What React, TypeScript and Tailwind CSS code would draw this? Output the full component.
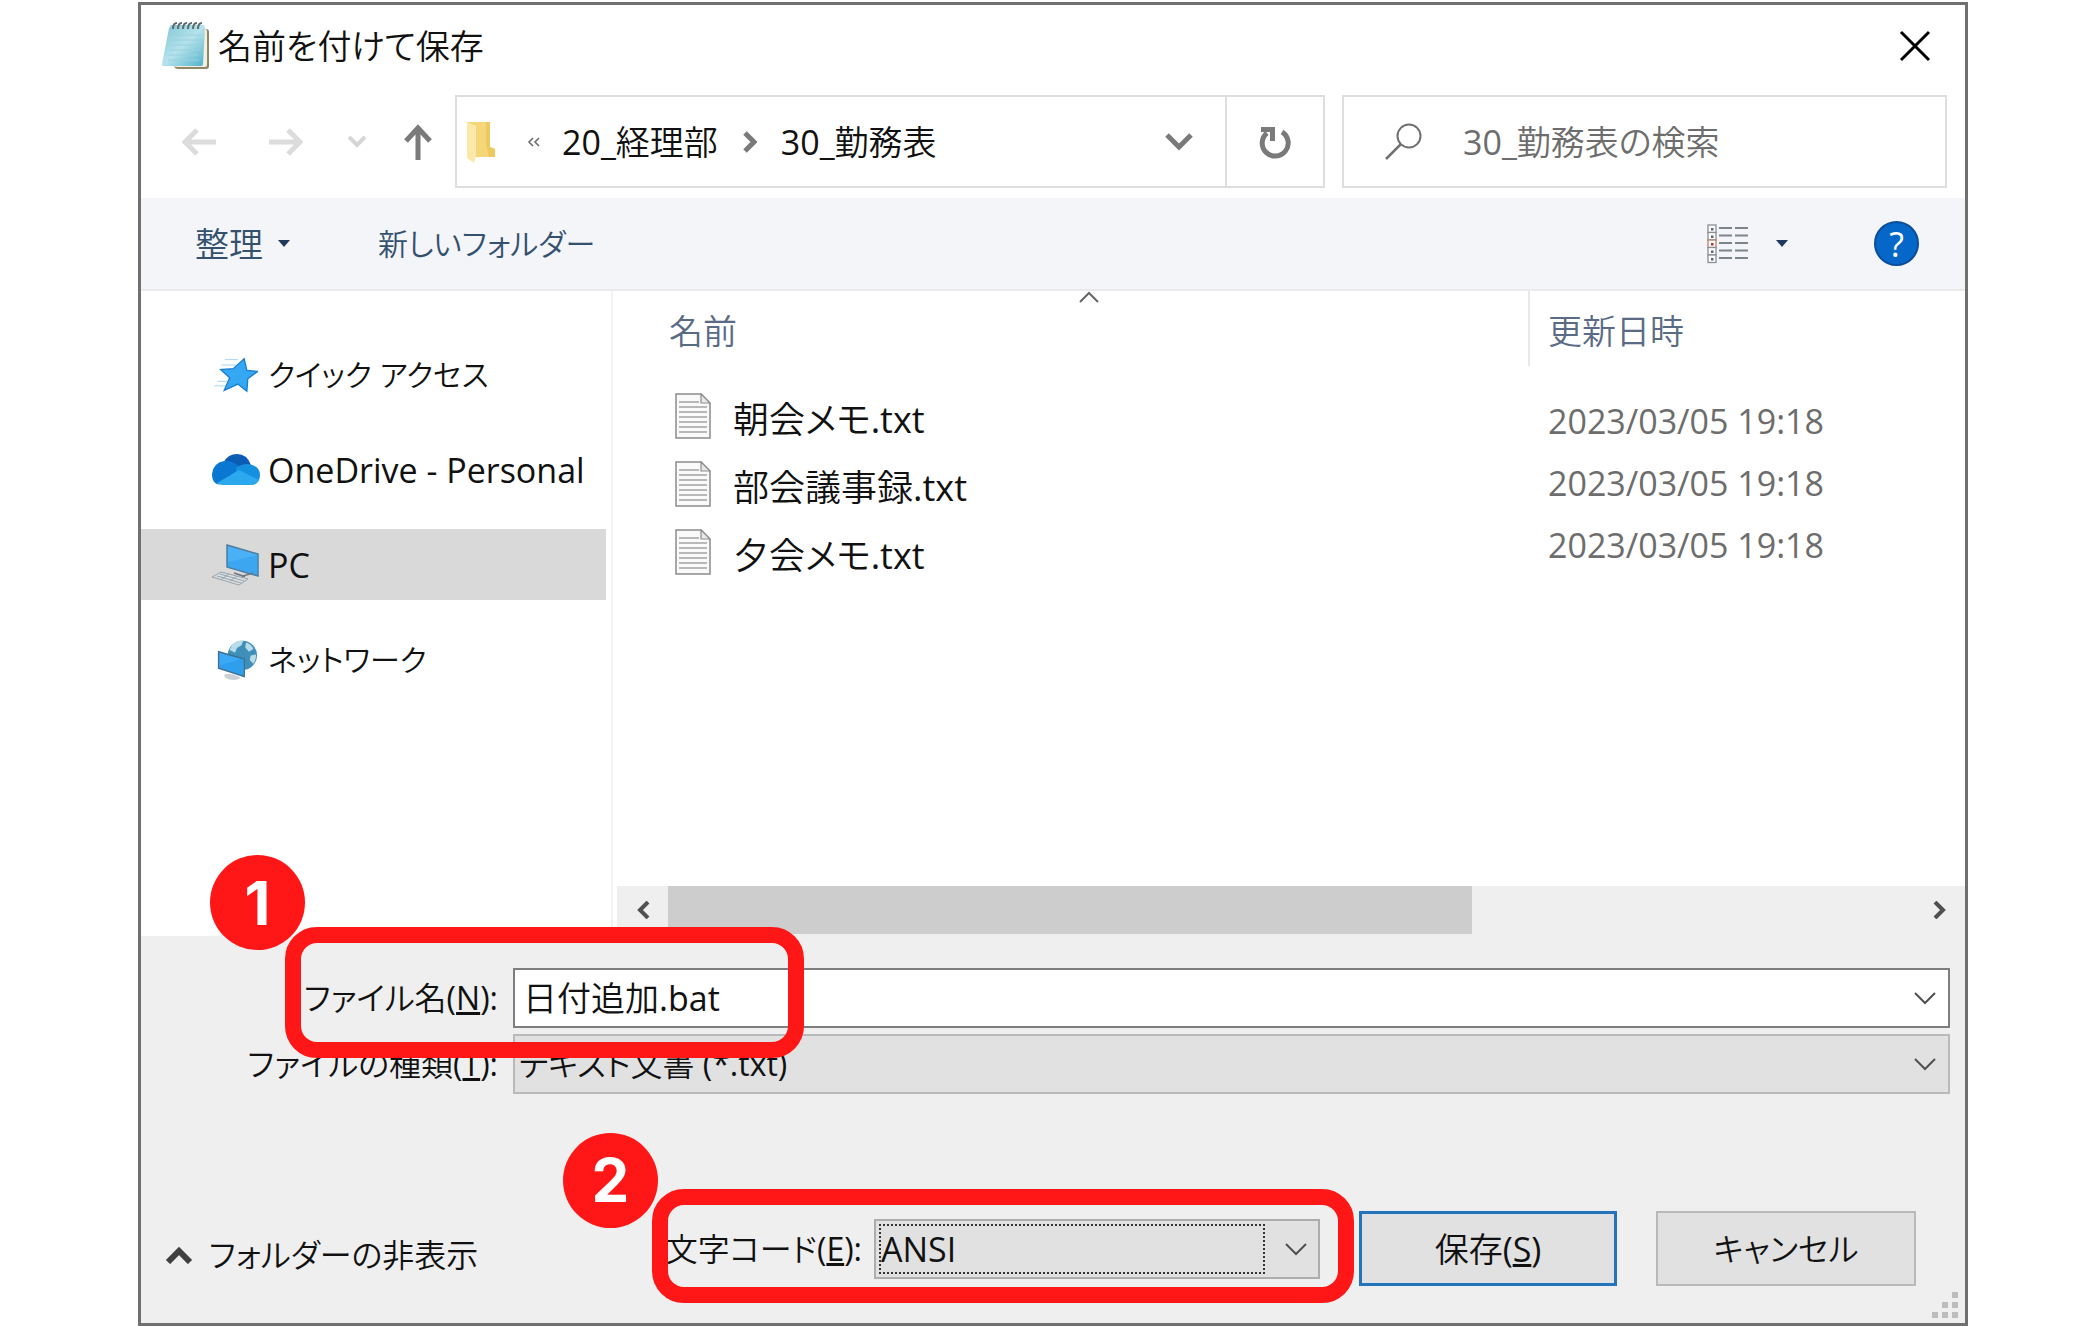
import { useState } from "react";
import type { ReactNode } from "react";

type FileRow = { name: string; date: string; dateCell: string };

const FILES: FileRow[] = [
  { name: "朝会メモ.txt", date: "2023/03/05 19:18", dateCell: "pt-2.5" },
  { name: "部会議事録.txt", date: "2023/03/05 19:18", dateCell: "pb-0.5" },
  { name: "夕会メモ.txt", date: "2023/03/05 19:18", dateCell: "pb-3.5" },
];

function NotepadIcon() {
  return (
    <svg width="48" height="50" viewBox="0 0 48 50" aria-hidden="true">
      <defs>
        <linearGradient id="pad" x1="0" y1="0" x2="1" y2="1">
          <stop offset="0" stopColor="#7fc4d6" />
          <stop offset="0.5" stopColor="#b5e3ec" />
          <stop offset="1" stopColor="#4fb0c9" />
        </linearGradient>
      </defs>
      <path d="M13 8h31q3 0 3 3v34q0 3-3 3H16q-3 0-4-3z" fill="#8f8668" />
      <path d="M12 8h31q2 0 2 3v33q0 2-2 2H15q-3 0-4-2z" fill="#f3efdf" />
      <path d="M9 4h33l1 3-2 36q0 2-3 2H1q-1 0-1-2L7 7z" fill="url(#pad)" />
      <path
        d="M10 14h29M9 19h30M9 24h29M8 29h30M7 34h30M6 39h31"
        stroke="#9ad0de"
        strokeWidth="1"
      />
      <path
        d="M11 8q0-6 4-6M16 8q0-6 4-6M21 8q0-6 4-6M26 8q0-6 4-6M31 8q0-6 4-6M36 8q0-6 4-6"
        stroke="#5d6b70"
        strokeWidth="2"
        fill="none"
      />
    </svg>
  );
}

function FolderIcon() {
  return (
    <svg width="28" height="42" viewBox="0 0 28 42" aria-hidden="true">
      <path d="M0 1h23v25l5 2v8H7z" fill="#f5d678" />
      <path d="M23 1v25l5 2v8h-6l-3-12V1z" fill="#eec95f" />
      <path d="M0 1l9 4v31l-2 6-7-5z" fill="#fce9a9" />
    </svg>
  );
}

function StarIcon() {
  return (
    <svg width="44" height="38" viewBox="0 0 48 42" aria-hidden="true">
      <path
        d="M12 4h14M8 10h16M8 16h8M4 28h10M0 33h12"
        stroke="#9fd0f3"
        strokeWidth="1"
      />
      <path
        d="M33 3l3 13 12 1-11 8-1 14-10-8-15 7 6-14-10-9 14-1z"
        fill="#35a8f3"
        stroke="#1b7fd0"
        strokeWidth="1.5"
      />
    </svg>
  );
}

function CloudIcon() {
  return (
    <svg width="48" height="32" viewBox="0 0 48 32" aria-hidden="true">
      <path d="M12 8Q16 0 25 0q10 0 14 11L26 16 12 8z" fill="#0a5cb4" />
      <path d="M10 31Q0 31 0 20 1 9 12 7q6-1 15 5l7 5-28 13z" fill="#0a78d3" />
      <path d="M24 14q5-4 12-4 2 0 4 1 8 2 8 10 0 10-10 10H24z" fill="#1590df" />
      <path d="M5 29l22-13 20 10q-3 5-9 5H11q-3 0-6-2z" fill="#2ba8ee" />
    </svg>
  );
}

function PcIcon() {
  return (
    <svg width="48" height="42" viewBox="0 0 48 42" aria-hidden="true">
      <path d="M15 1l31 9v22l-31-9z" fill="#4ab1f7" stroke="#4d7c9d" strokeWidth="1.5" />
      <path d="M16 18L46 11v20l-30-8z" fill="#2f9bea" opacity="0.5" />
      <path d="M22 29l9 3 10-3M25 30l8 3" stroke="#6c7780" strokeWidth="1.5" fill="none" />
      <path d="M0 33l9-5 27 7-9 6z" fill="#d8dde1" stroke="#9aa3aa" strokeWidth="1" />
      <path d="M5 32l24 7M8 30l24 7M10 35l7-5M18 37l7-5" stroke="#9aa3aa" strokeWidth="1" />
    </svg>
  );
}

function NetworkIcon() {
  return (
    <svg width="44" height="44" viewBox="0 0 48 44" aria-hidden="true">
      <circle cx="31" cy="17" r="16" fill="#3f8fba" />
      <path
        d="M20 5q6-5 12-4l-2 5-5 3-2 5-6-3zM35 3q6 2 8 7l-5 3-4-5zM40 17l6-1q0 6-3 10l-4-4z"
        fill="#b9dcea"
      />
      <path d="M5 13l28 8v19L5 31z" fill="#3ba9f5" stroke="#3d6f91" strokeWidth="1.5" />
      <path d="M6 28l26-8v19L6 30z" fill="#2494e6" opacity="0.5" />
      <path d="M11 38q6-3 16 2l2 2q-8 4-17-1z" fill="#c9d1d6" />
    </svg>
  );
}

function TextFileIcon() {
  return (
    <svg width="36" height="46" viewBox="0 0 36 46" aria-hidden="true">
      <path d="M1 1h25l9 9v35H1z" fill="#fafafa" stroke="#8c8c8c" strokeWidth="1.5" />
      <path d="M26 1v9h9z" fill="#e8e8e8" stroke="#8c8c8c" strokeWidth="1.2" />
      <path
        d="M4 9h20M4 14h28M4 19h28M4 24h28M4 29h28M4 34h28M4 39h28"
        stroke="#a3a3a3"
        strokeWidth="1.5"
      />
    </svg>
  );
}

function ViewIcon() {
  const rows = [0, 1, 2, 3, 4];
  return (
    <svg width="42" height="40" viewBox="0 0 42 40" aria-hidden="true">
      {rows.map((i) => (
        <g key={i}>
          <rect
            x="1"
            y={1 + i * 7.5}
            width="8"
            height="7.5"
            fill="#fff"
            stroke={i === 2 ? "#b5806c" : "#8a8f94"}
            strokeWidth="1.3"
          />
          <rect x="4" y={4 + i * 7.5} width="2.5" height="2.5" fill={i === 2 ? "#b5302a" : "#5f6870"} />
          <path d={`M12 ${4 + i * 7.5}h13M28 ${4 + i * 7.5}h13`} stroke="#7d848a" strokeWidth="1.8" />
        </g>
      ))}
    </svg>
  );
}

function Chevron() {
  return (
    <svg width="22" height="14" viewBox="0 0 22 14" fill="none" aria-hidden="true">
      <path d="M1 2l10 10L21 2" stroke="#505050" strokeWidth="2" />
    </svg>
  );
}

function Triangle() {
  return (
    <svg width="12" height="7" viewBox="0 0 12 7" aria-hidden="true">
      <path d="M0 0h12L6 7z" fill="#1e395b" />
    </svg>
  );
}

type Place = { label: string; icon: ReactNode; text: string };

const PLACES: Place[] = [
  { label: "クイック アクセス", icon: <StarIcon />, text: "text-[30px]" },
  { label: "OneDrive - Personal", icon: <CloudIcon />, text: "text-[34px]" },
  { label: "PC", icon: <PcIcon />, text: "text-[34px]" },
  { label: "ネットワーク", icon: <NetworkIcon />, text: "text-[30px]" },
];

function PlaceItem({
  place,
  selected,
  onClick,
}: {
  place: Place;
  selected: boolean;
  onClick: () => void;
}) {
  return (
    <button
      type="button"
      onClick={onClick}
      className={`flex h-[71px] w-full items-center gap-2 pl-[71px] text-left whitespace-nowrap ${
        selected ? "bg-[#d9d9d9]" : ""
      }`}
    >
      <span className="flex w-12 justify-center">{place.icon}</span>
      <span className={place.text}>{place.label}</span>
    </button>
  );
}

function StepBadge({ step, className }: { step: number; className: string }) {
  return (
    <span
      className={`absolute flex size-[95px] items-center justify-center rounded-full bg-[#ff1616] font-['Inter',sans-serif] text-[60px] font-bold text-white ${className}`}
    >
      {step}
    </span>
  );
}

export default function App() {
  const [place, setPlace] = useState("PC");
  const [fileName, setFileName] = useState("日付追加.bat");

  return (
    <div className="flex min-h-screen flex-col bg-white pt-0.5 pr-[132px] pl-[138px] font-['Open_Sans','Noto_Sans_CJK_JP_DemiLight','Noto_Sans_CJK_JP_Light','Noto_Sans_CJK_JP',sans-serif] text-[34px] leading-[44px] text-[#111] [font-feature-settings:'palt']">
      <main className="flex flex-1 flex-col border-3 border-[#707070]">
        {/* タイトルバー */}
        <header className="flex h-[82px] items-center justify-between pr-[34px] pl-[21px]">
          <div className="flex items-center gap-2">
            <NotepadIcon />
            <h1>名前を付けて保存</h1>
          </div>
          <button type="button" aria-label="閉じる">
            <svg width="32" height="32" viewBox="0 0 32 32" fill="none">
              <path d="M2 2l28 28M30 2L2 30" stroke="#000" strokeWidth="3" />
            </svg>
          </button>
        </header>

        {/* アドレスバー */}
        <nav className="mt-2 flex h-[93px] pr-[18px] pl-[14px]">
          <div className="flex w-[300px] shrink-0 items-center">
            <button type="button" aria-label="戻る" className="flex w-[87px] justify-center">
              <svg width="34" height="28" viewBox="0 0 34 28" fill="none">
                <path d="M34 14H3M15 2L3 14l12 12" stroke="#dcdcdc" strokeWidth="5" />
              </svg>
            </button>
            <button type="button" aria-label="進む" className="flex w-[87px] justify-center">
              <svg width="34" height="28" viewBox="0 0 34 28" fill="none">
                <path d="M0 14h31M19 2l12 12-12 12" stroke="#dcdcdc" strokeWidth="5" />
              </svg>
            </button>
            <button type="button" aria-label="最近表示した場所" className="flex w-14 justify-center">
              <svg width="20" height="14" viewBox="0 0 20 14" fill="none">
                <path d="M2 2l8 8 8-8" stroke="#d6d6d6" strokeWidth="4" />
              </svg>
            </button>
            <button type="button" aria-label="上へ" className="flex w-[66px] justify-center">
              <svg width="30" height="36" viewBox="0 0 30 36" fill="none">
                <path d="M15 36V4M3 17L15 4l12 13" stroke="#7a7a7a" strokeWidth="5" />
              </svg>
            </button>
          </div>

          <div className="flex flex-1 border-2 border-[#dedede]">
            <div className="flex flex-1 items-center pl-[10px] whitespace-nowrap">
              <FolderIcon />
              <svg className="ml-8" width="13" height="10" viewBox="0 0 13 10" fill="none">
                <path d="M6 1L2 5l4 4M12 1L8 5l4 4" stroke="#666" strokeWidth="1.5" />
              </svg>
              <button type="button" className="ml-[22px]">
                20_経理部
              </button>
              <svg className="mx-6" width="15" height="22" viewBox="0 0 15 22" fill="none">
                <path d="M3 2l9 9-9 9" stroke="#7a7a7a" strokeWidth="5" />
              </svg>
              <button type="button">30_勤務表</button>
              <button type="button" aria-label="以前の場所" className="mr-8 ml-auto">
                <svg width="28" height="20" viewBox="0 0 28 20" fill="none">
                  <path d="M2 3l12 12L26 3" stroke="#7a7a7a" strokeWidth="5" />
                </svg>
              </button>
            </div>
            <button
              type="button"
              aria-label="最新の情報に更新"
              className="flex w-[98px] items-center justify-center border-l-2 border-[#dedede]"
            >
              <svg width="32" height="34" viewBox="0 0 32 34" fill="none">
                <path d="M23 7a13 13 0 1 1-15 1" stroke="#7a7a7a" strokeWidth="5" />
                <path d="M2 2h14v14h-5V7H2z" fill="#7a7a7a" />
              </svg>
            </button>
          </div>

          <label className="ml-[17px] flex w-[605px] items-center gap-[41px] border-2 border-[#dedede] pl-[41px]">
            <svg className="shrink-0" width="37" height="37" viewBox="0 0 37 37" fill="none">
              <circle cx="24" cy="13" r="11.5" stroke="#707070" strokeWidth="2" />
              <path d="M16 21L1 36" stroke="#707070" strokeWidth="2.5" />
            </svg>
            <input
              type="search"
              aria-label="30_勤務表の検索"
              placeholder="30_勤務表の検索"
              className="w-full min-w-0 outline-none placeholder:text-[#6d6d6d]"
            />
          </label>
        </nav>

        {/* ツールバー */}
        <div className="mt-[10px] flex h-[93px] items-center border-b-2 border-[#e8eaec] bg-[#f3f5f8] pr-[46px] pl-[54px] text-[#34506f]">
          <button type="button" className="flex items-center gap-[15px]">
            整理
            <Triangle />
          </button>
          <button type="button" className="ml-[88px] text-[30px]">
            新しいフォルダー
          </button>
          <button type="button" aria-label="表示方法の変更" className="ml-auto">
            <ViewIcon />
          </button>
          <button type="button" aria-label="その他のオプション" className="ml-[27px] flex">
            <Triangle />
          </button>
          <button
            type="button"
            aria-label="ヘルプ"
            className="ml-[86px] flex size-[45px] items-center justify-center rounded-full border-2 border-[#0b4f9c] bg-[#0567c8] text-white"
          >
            ?
          </button>
        </div>

        <div className="flex flex-1">
          <aside className="w-[472px] shrink-0 border-r-2 border-[#f3f3f3] pt-12 pr-[5px]">
            <div className="flex flex-col gap-6">
              {PLACES.map((p) => (
                <PlaceItem
                  key={p.label}
                  place={p}
                  selected={place === p.label}
                  onClick={() => setPlace(p.label)}
                />
              ))}
            </div>
          </aside>

          <section className="flex min-w-0 flex-1 flex-col">
            <table className="w-full table-fixed border-collapse text-left">
              <thead className="text-[#5a6c85]">
                <tr className="h-[75px]">
                  <th className="relative w-[916px] pt-1 pl-14 font-normal">
                    名前
                    <svg
                      className="absolute top-0 left-[466px]"
                      width="20"
                      height="12"
                      viewBox="0 0 20 12"
                      fill="none"
                    >
                      <path d="M1 11l9-9 9 9" stroke="#666" strokeWidth="2" />
                    </svg>
                  </th>
                  <th className="border-l-2 border-[#e8e8e8] pt-1 pl-[18px] font-normal">更新日時</th>
                </tr>
              </thead>
              <tbody>
                <tr className="h-4" aria-hidden="true">
                  <td />
                  <td />
                </tr>
                {FILES.map((file) => (
                  <tr key={file.name} className="h-[68px]">
                    <td className="pl-[62px]">
                      <div className="flex items-center gap-[22px]">
                        <TextFileIcon />
                        <span className="pt-2 text-[36px]">{file.name}</span>
                      </div>
                    </td>
                    <td className={`pl-[19px] text-[#6d6d6d] ${file.dateCell}`}>{file.date}</td>
                  </tr>
                ))}
              </tbody>
            </table>

            {/* 横スクロールバー */}
            <div className="mt-auto ml-1 flex h-[50px] items-stretch bg-[#efefef] pb-[2px]">
              <button type="button" aria-label="左へスクロール" className="flex w-[51px] items-center justify-center">
                <svg width="14" height="18" viewBox="0 0 14 18" fill="none">
                  <path d="M12 1L4 9l8 8" stroke="#505050" strokeWidth="4" />
                </svg>
              </button>
              <div className="flex-1">
                <div className="h-full w-[64.5%] bg-[#cdcdcd]" />
              </div>
              <button type="button" aria-label="右へスクロール" className="flex w-[51px] items-center justify-center">
                <svg width="14" height="18" viewBox="0 0 14 18" fill="none">
                  <path d="M2 1l8 8-8 8" stroke="#505050" strokeWidth="4" />
                </svg>
              </button>
            </div>
          </section>
        </div>

        <footer className="relative bg-[#efefef] pt-8 pr-[15px] pb-[37px]">
          <div className="grid grid-cols-[357px_1fr] items-center gap-x-[15px] gap-y-[6px]">
            <label htmlFor="file-name" className="text-right text-[32px] whitespace-nowrap">
              ファイル名(<u>N</u>):
            </label>
            <div className="flex h-[60px] items-center border-2 border-[#7e7e7e] bg-white pr-3 pl-2">
              <input
                id="file-name"
                value={fileName}
                onChange={(e) => setFileName(e.target.value)}
                className="min-w-0 flex-1 outline-none"
              />
              <button type="button" aria-label="ファイル名の履歴">
                <Chevron />
              </button>
            </div>

            <label htmlFor="file-type" className="text-right text-[32px] whitespace-nowrap">
              ファイルの種類(<u>T</u>):
            </label>
            <div className="flex h-[60px] items-center border-2 border-[#b9b9b9] bg-[#e1e1e1] pr-3 pl-1">
              <select id="file-type" className="flex-1 appearance-none text-[32px] outline-none">
                <option>テキスト文書 (*.txt)</option>
                <option>すべてのファイル (*.*)</option>
              </select>
              <Chevron />
            </div>
          </div>

          <div className="mt-[117px] flex items-center pr-[34px] pl-6">
            <button type="button" className="flex items-center gap-4 pt-3 text-[32px] whitespace-nowrap">
              <svg width="28" height="18" viewBox="0 0 28 18" fill="none">
                <path d="M3 16L14 5l11 11" stroke="#404040" strokeWidth="6" />
              </svg>
              フォルダーの非表示
            </button>

            <div className="relative ml-auto flex items-center gap-3">
              <label htmlFor="encoding" className="text-[32px] whitespace-nowrap">
                文字コード(<u>E</u>):
              </label>
              <div className="flex h-[60px] w-[446px] items-center border-2 border-[#adadad] bg-[#e1e1e1] p-[3px]">
                <select
                  id="encoding"
                  className="h-[50px] flex-1 appearance-none border-2 border-dotted border-[#333] outline-none"
                >
                  <option>ANSI</option>
                  <option>UTF-8</option>
                </select>
                <span className="flex w-[50px] shrink-0 justify-end pr-2">
                  <Chevron />
                </span>
              </div>
              <div className="pointer-events-none absolute -top-[30px] -right-[34px] h-[114px] w-[702px] rounded-[32px] border-16 border-[#ff1616]">
                <StepBadge step={2} className="-top-[72px] -left-[105px]" />
              </div>
            </div>

            <button
              type="button"
              className="ml-[39px] h-[75px] w-[258px] border-3 border-[#2474bb] bg-[#e1e1e1]"
            >
              保存(<u>S</u>)
            </button>
            <button
              type="button"
              className="ml-[39px] h-[75px] w-[260px] border-2 border-[#b9b9b9] bg-[#e1e1e1] text-[32px]"
            >
              キャンセル
            </button>
          </div>

          <div className="pointer-events-none absolute -top-[9px] left-36 h-[131px] w-[519px] rounded-[32px] border-16 border-[#ff1616]">
            <StepBadge step={1} className="-top-[88px] -left-[91px]" />
          </div>

          <svg
            className="absolute right-[7px] bottom-[5px]"
            width="26"
            height="26"
            viewBox="0 0 26 26"
            fill="#bdbdbd"
          >
            <path d="M20 0h6v6h-6zM10 10h6v6h-6zM20 10h6v6h-6zM0 20h6v6H0zM10 20h6v6h-6zM20 20h6v6h-6z" />
          </svg>
        </footer>
      </main>
    </div>
  );
}
